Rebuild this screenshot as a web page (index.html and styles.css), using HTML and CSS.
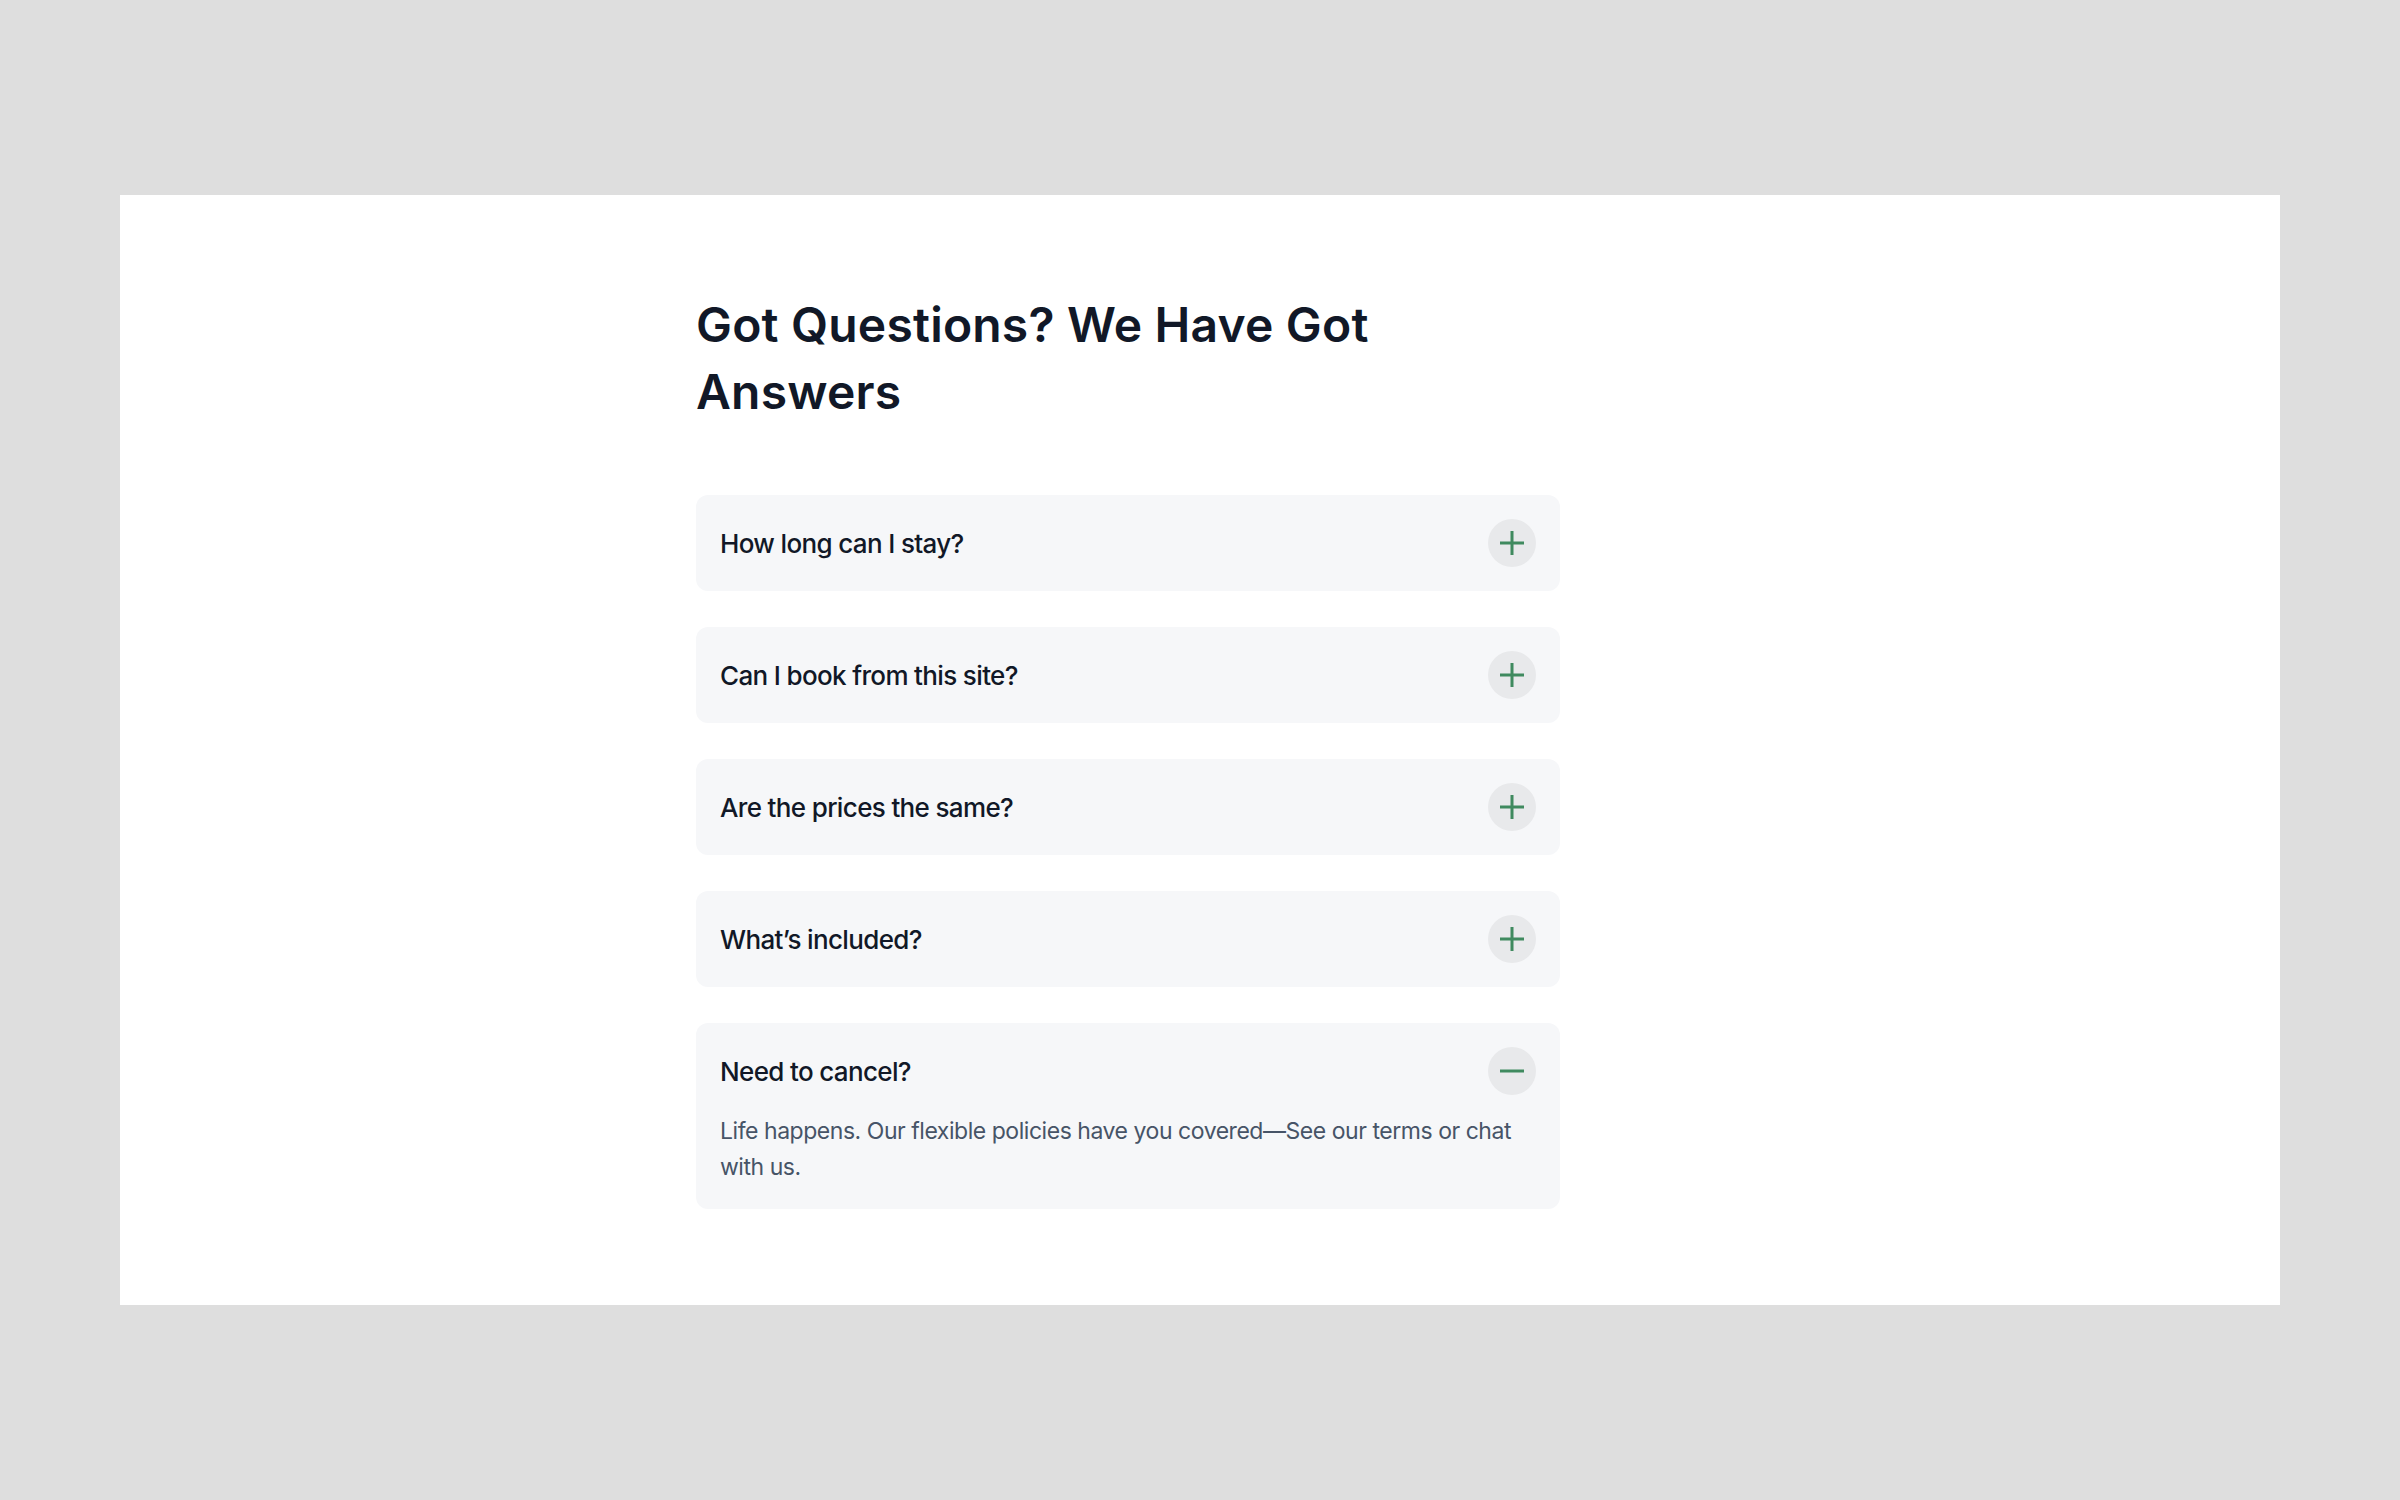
FILE: index.html
```html
<!DOCTYPE html>
<html lang="en">
<head>
<meta charset="utf-8">
<title>FAQ</title>
<link rel="stylesheet" href="styles.css">
</head>
<body>
<main class="panel">
  <section class="container">
    <h1 class="title">Got Questions? We Have Got<br>Answers</h1>
    <div class="faq">
      <div class="item">
        <div class="item-head">
          <span class="question">How long can I stay?</span>
          <span class="toggle"><svg viewBox="0 0 24 24" width="24" height="24"><path d="M12 0v24M0 12h24"/></svg></span>
        </div>
      </div>
      <div class="item">
        <div class="item-head">
          <span class="question">Can I book from this site?</span>
          <span class="toggle"><svg viewBox="0 0 24 24" width="24" height="24"><path d="M12 0v24M0 12h24"/></svg></span>
        </div>
      </div>
      <div class="item">
        <div class="item-head">
          <span class="question">Are the prices the same?</span>
          <span class="toggle"><svg viewBox="0 0 24 24" width="24" height="24"><path d="M12 0v24M0 12h24"/></svg></span>
        </div>
      </div>
      <div class="item">
        <div class="item-head">
          <span class="question">What’s included?</span>
          <span class="toggle"><svg viewBox="0 0 24 24" width="24" height="24"><path d="M12 0v24M0 12h24"/></svg></span>
        </div>
      </div>
      <div class="item open">
        <div class="item-head">
          <span class="question">Need to cancel?</span>
          <span class="toggle"><svg viewBox="0 0 24 24" width="24" height="24"><path d="M0 12h24"/></svg></span>
        </div>
        <p class="answer">Life happens. Our flexible policies have you covered—See our terms or chat with us.</p>
      </div>
    </div>
  </section>
</main>
</body>
</html>
```

FILE: styles.css
```css
* { box-sizing: border-box; }

html, body {
  margin: 0;
  padding: 0;
}

body {
  background: #dedede;
  min-height: 1500px;
  display: flex;
  align-items: center;
  padding: 0 120px;
  font-family: "Inter", "Noto Sans", sans-serif;
  color: #111827;
}

.panel {
  flex: 1;
  background: #ffffff;
  padding: 96px 0;
}

.container {
  width: 1008px;
  margin: 0 auto;
}

.title {
  margin: 0 0 70px;
  font-size: 48px;
  line-height: 1.4;
  font-weight: 600;
  letter-spacing: 0.004em;
  color: #111827;
}

.faq {
  width: 864px;
  display: flex;
  flex-direction: column;
  gap: 36px;
}

.item {
  background: #f6f7f9;
  border-radius: 12px;
}

.item-head {
  display: flex;
  align-items: center;
  justify-content: space-between;
  padding: 24px;
}

.question {
  font-size: 26px;
  font-weight: 500;
  letter-spacing: -0.025em;
  color: #111827;
}

.toggle {
  width: 48px;
  height: 48px;
  border-radius: 50%;
  background: #e8e9eb;
  display: flex;
  align-items: center;
  justify-content: center;
}

.toggle svg path {
  fill: none;
  stroke: #3f8a5f;
  stroke-width: 3;
}

.answer {
  margin: -6px 0 0;
  padding: 0 24px 24px;
  font-size: 23px;
  line-height: 36px;
  color: #475467;
  letter-spacing: -0.02em;
}
```
